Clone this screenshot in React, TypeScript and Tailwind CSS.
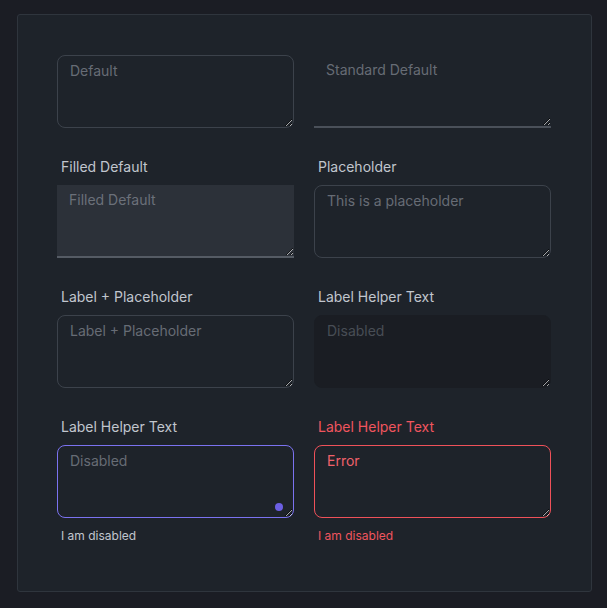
import React from "react";

const font = { fontFamily: "Inter, 'Noto Sans', sans-serif" };

function Label({ children, error }: { children: React.ReactNode; error?: boolean }) {
  return (
    <div className={`ml-1 mb-2 text-[14px] leading-5 ${error ? "text-[#f0555e]" : "text-[#c1c6ce]"}`}>
      {children}
    </div>
  );
}

const base =
  "block w-full h-[73px] px-3 py-1 text-[14px] leading-[21px] outline-none [color-scheme:dark] resize-y";

export default function App() {
  return (
    <div className="min-h-screen bg-[#1b1d24] pt-[14px] pl-[17px]" style={font}>
      <div className="w-[575px] h-[578px] rounded-[3px] border border-[#2f353d] bg-[#1e232a] pl-[39px] pr-[40px] pt-10">
        <div className="grid grid-cols-[237px_237px] gap-x-[20px] gap-y-[29px]">
          <div>
            <textarea
              placeholder="Default"
              className={`${base} rounded-lg border border-[#3c424b] bg-transparent text-[#c1c6ce] placeholder:text-[#676c75]`}
            />
          </div>
          <div>
            <textarea
              placeholder="Standard Default"
              className={`${base} rounded-none border-0 border-b-2 border-[#4a5059] bg-transparent text-[#c1c6ce] placeholder:text-[#676c75]`}
            />
          </div>

          <div>
            <Label>Filled Default</Label>
            <textarea
              placeholder="Filled Default"
              className={`${base} rounded-none border-0 border-b-2 border-[#555b64] bg-[#2c3139] text-[#c1c6ce] placeholder:text-[#6b7079]`}
            />
          </div>
          <div>
            <Label>Placeholder</Label>
            <textarea
              placeholder="This is a placeholder"
              className={`${base} rounded-lg border border-[#3c424b] bg-transparent text-[#c1c6ce] placeholder:text-[#676c75]`}
            />
          </div>

          <div>
            <Label>Label + Placeholder</Label>
            <textarea
              placeholder="Label + Placeholder"
              className={`${base} rounded-lg border border-[#3c424b] bg-transparent text-[#c1c6ce] placeholder:text-[#676c75]`}
            />
          </div>
          <div>
            <Label>Label Helper Text</Label>
            <textarea
              placeholder="Disabled"
              readOnly
              className={`${base} rounded-lg border border-[#1a1d23] bg-[#1a1d23] text-[#4a4f57] placeholder:text-[#484d55]`}
            />
          </div>

          <div>
            <Label>Label Helper Text</Label>
            <div className="relative">
              <textarea
                placeholder="Disabled"
                className={`${base} rounded-lg border border-[#7b72f0] bg-transparent text-[#c1c6ce] placeholder:text-[#676c75]`}
              />
              <span className="pointer-events-none absolute right-[11px] bottom-[7px] h-2 w-2 rounded-full bg-[#6c5fe3]" />
            </div>
            <div className="ml-1 mt-2.5 text-[12px] leading-4 text-[#c1c6ce]">I am disabled</div>
          </div>
          <div>
            <Label error>Label Helper Text</Label>
            <textarea
              defaultValue="Error"
              className={`${base} rounded-lg border border-[#ef5159] bg-transparent text-[#f0616a] placeholder:text-[#f0616a]`}
            />
            <div className="ml-1 mt-2.5 text-[12px] leading-4 text-[#f0555e]">I am disabled</div>
          </div>
        </div>
      </div>
    </div>
  );
}
